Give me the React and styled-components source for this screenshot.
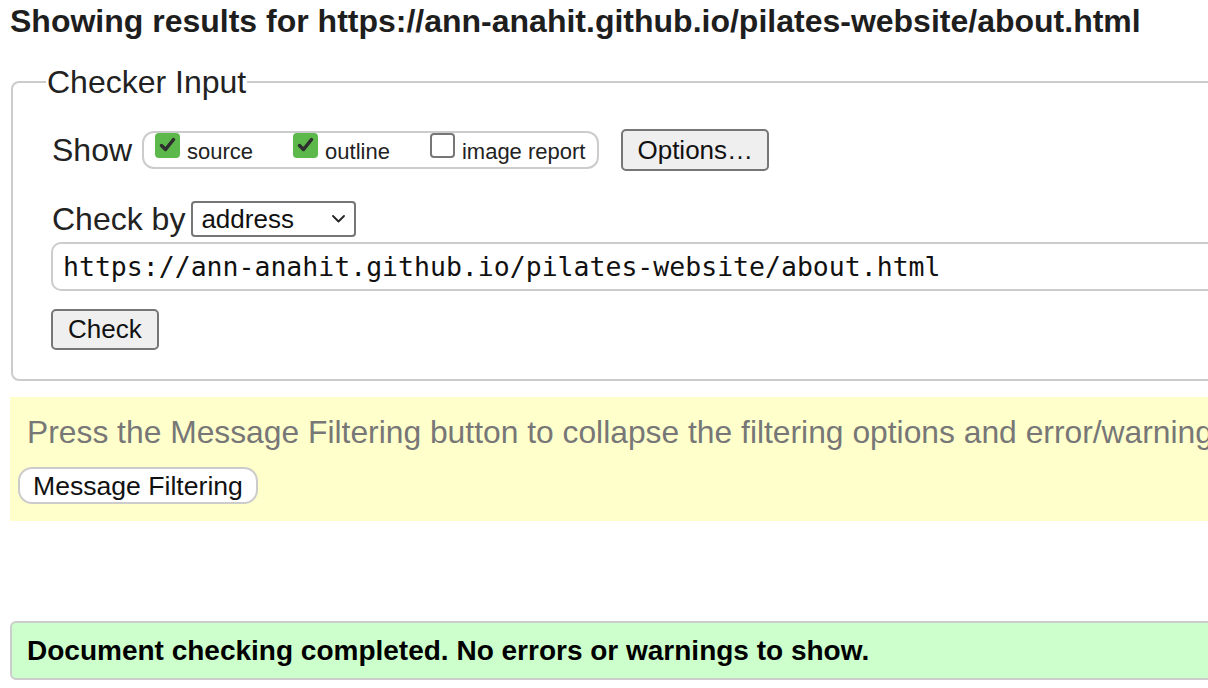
import React from "react";
import styled, { createGlobalStyle } from "styled-components";

const GlobalStyle = createGlobalStyle`
  html, body {
    margin: 0;
    padding: 0;
    background: #fff;
    overflow: hidden;
  }
  body {
    font-family: "Liberation Sans", Arial, sans-serif;
    color: #222;
  }
`;

const Page = styled.div`
  width: 1320px;
  padding: 0 0 0 10px;
`;

const Heading = styled.h2`
  margin: 0;
  padding-top: 3px;
  font-size: 32px;
  font-weight: 700;
  line-height: 36px;
  color: #1e1e1e;
  white-space: nowrap;
`;

const Fieldset = styled.fieldset`
  margin: 26px 0 0 1px;
  padding: 30px 0 29px 39px;
  border: 2px solid #ccc;
  border-radius: 8px;
  display: flex;
  flex-direction: column;
  align-items: flex-start;
`;

const Legend = styled.legend`
  margin-left: -6px;
  padding: 0 1px;
  font-size: 32px;
  line-height: 34px;
  color: #222;
`;

const Row = styled.div`
  display: flex;
  align-items: center;
  margin-top: ${(p) => p.$top || 0}px;
`;

const Label = styled.span`
  font-size: 32px;
  line-height: 36px;
  color: #222;
  margin-right: ${(p) => p.$gap || 10}px;
`;

const Pill = styled.div`
  display: flex;
  align-items: flex-start;
  gap: 40px;
  height: 34px;
  padding: 0 12px 0 11px;
  border: 2px solid #ccc;
  border-radius: 12px;
`;

const CheckItem = styled.label`
  display: flex;
  align-items: flex-start;
  gap: 7px;
  font-size: 22px;
  line-height: 26px;
  color: #222;
`;

const CheckText = styled.span`
  padding-top: 6px;
`;

const Box = styled.span`
  width: 25px;
  height: 25px;
  box-sizing: border-box;
  border-radius: 4px;
  display: flex;
  align-items: center;
  justify-content: center;
  background: ${(p) => (p.$checked ? "#5cb84a" : "#fff")};
  border: ${(p) => (p.$checked ? "none" : "2px solid #767676")};
`;

const Button = styled.button`
  font-family: "Liberation Sans", Arial, sans-serif;
  font-size: 26px;
  color: #111;
  background: #efefef;
  border: 2px solid #767676;
  border-radius: 5px;
  height: ${(p) => p.$h || 42}px;
  padding: 0 ${(p) => p.$pad || 14}px;
  margin-left: ${(p) => p.$left || 0}px;
`;

const SelectWrap = styled.div`
  position: relative;
  width: 165px;
  height: 36px;
`;

const Select = styled.select`
  appearance: none;
  width: 100%;
  height: 100%;
  box-sizing: border-box;
  border: 2px solid #767676;
  border-radius: 4px;
  background: #fff;
  font-family: "Liberation Sans", Arial, sans-serif;
  font-size: 26px;
  color: #111;
  padding: 0 0 0 8px;
`;

const Chevron = styled.svg`
  position: absolute;
  right: 11px;
  top: 14px;
  pointer-events: none;
`;

const UrlInput = styled.input`
  width: 1240px;
  height: 49px;
  box-sizing: border-box;
  margin-top: 5px;
  margin-left: -1px;
  border: 2px solid #ccc;
  border-radius: 10px;
  padding: 0 0 0 10px;
  font-family: "DejaVu Sans Mono", "Liberation Mono", monospace;
  font-size: 26.5px;
  color: #111;
  background: #fff;
`;

const Notice = styled.div`
  margin-top: 16px;
  height: 124px;
  box-sizing: border-box;
  background: #ffffcc;
  padding: 17px 0 0 8px;
`;

const NoticeText = styled.p`
  margin: 0 0 0 9px;
  font-size: 31.8px;
  line-height: 36px;
  color: #777;
  white-space: nowrap;
`;

const PillButton = styled.button`
  margin-top: 17px;
  height: 37px;
  padding: 0 13px;
  background: #fff;
  border: 2px solid #ccc;
  border-radius: 14px;
  font-family: "Liberation Sans", Arial, sans-serif;
  font-size: 26.6px;
  line-height: 30px;
  color: #111;
`;

const Success = styled.div`
  margin-top: 100px;
  height: 59px;
  box-sizing: border-box;
  background: #ccffcc;
  border: 2px solid #ccc;
  border-radius: 6px;
  display: flex;
  align-items: center;
  padding-left: 15px;
  font-size: 28px;
  font-weight: 700;
  color: #000;
  white-space: nowrap;
`;

const Tick = () => (
  <svg width="25" height="25" viewBox="0 0 25 25">
    <path d="M6.5 12.5 L10.5 16.5 L18.5 6.5" fill="none" stroke="#2e2e2e" strokeWidth="3.5" strokeLinecap="round" strokeLinejoin="round" />
  </svg>
);

const Check = ({ checked, children }) => (
  <CheckItem>
    <Box $checked={checked}>{checked && <Tick />}</Box>
    <CheckText>{children}</CheckText>
  </CheckItem>
);

export default function App() {
  const url = "https://ann-anahit.github.io/pilates-website/about.html";
  return (
    <>
      <GlobalStyle />
      <Page>
        <Heading>Showing results for {url}</Heading>
        <Fieldset>
          <Legend>Checker Input</Legend>
          <Row>
            <Label $gap={10}>Show</Label>
            <Pill>
              <Check checked>source</Check>
              <Check checked>outline</Check>
              <Check>image report</Check>
            </Pill>
            <Button $left={22}>Options…</Button>
          </Row>
          <Row $top={30}>
            <Label $gap={6}>Check by</Label>
            <SelectWrap>
              <Select defaultValue="address">
                <option value="address">address</option>
                <option value="upload">file upload</option>
                <option value="text">text input</option>
              </Select>
              <Chevron width="13" height="8" viewBox="0 0 13 8">
                <path d="M1 1 L6.5 6.5 L12 1" fill="none" stroke="#222" strokeWidth="1.8" strokeLinecap="round" strokeLinejoin="round" />
              </Chevron>
            </SelectWrap>
          </Row>
          <UrlInput defaultValue={url} />
          <Row $top={18}>
            <Button $h={41} $pad={15} style={{ marginLeft: -1 }}>Check</Button>
          </Row>
        </Fieldset>
        <Notice>
          <NoticeText>
            Press the Message Filtering button to collapse the filtering options and error/warning/info counts.
          </NoticeText>
          <PillButton>Message Filtering</PillButton>
        </Notice>
        <Success>Document checking completed. No errors or warnings to show.</Success>
      </Page>
    </>
  );
}
